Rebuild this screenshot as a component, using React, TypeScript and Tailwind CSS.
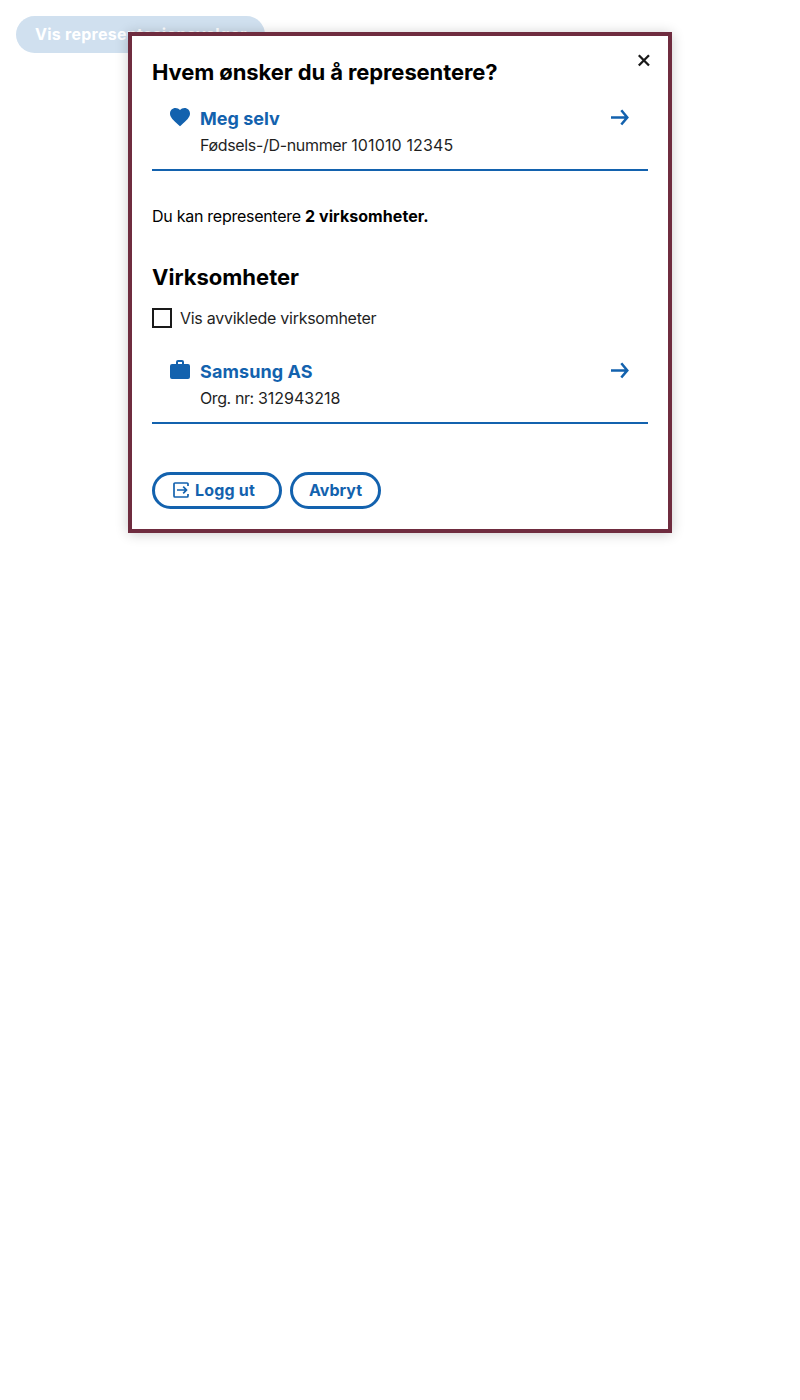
import React from "react";

function Arrow() {
  return (
    <svg width="24" height="24" viewBox="0 0 24 24" fill="none" stroke="#1362ae" strokeWidth="2.5">
      <path d="M3 12.4h16.5M13.3 5.3l6 7.1-6 7.1" />
    </svg>
  );
}

function Entry({ icon, title, children }: { icon: string; title: React.ReactNode; children: React.ReactNode }) {
  return (
    <a className="flex h-[73px] border-b-2 border-[#1362ae] pl-4 pr-4 pt-[7px]">
      <svg className="mr-2 shrink-0" width="24" height="24" viewBox="0 0 24 24" fill="#1362ae">
        <path d={icon} />
      </svg>
      <span className="flex-1">
        <span className="block text-[18px] leading-[27px] font-bold text-[#1362ae]">{title}</span>
        <span className="block text-[16px] leading-[26px] text-[#1f1f1f]">{children}</span>
      </span>
      <Arrow />
    </a>
  );
}

const heart =
  "M12 21.35l-1.45-1.32C5.4 15.36 2 12.28 2 8.5 2 5.42 4.42 3 7.5 3c1.74 0 3.41.81 4.5 2.09C13.09 3.81 14.76 3 16.5 3 19.58 3 22 5.42 22 8.5c0 3.78-3.4 6.86-8.55 11.54L12 21.35z";
const briefcase =
  "M10 2h4a2 2 0 0 1 2 2v2h4a2 2 0 0 1 2 2v11a2 2 0 0 1-2 2H4a2 2 0 0 1-2-2V8a2 2 0 0 1 2-2h4V4a2 2 0 0 1 2-2m4 4V4h-4v2h4z";

export default function App() {
  return (
    <div className="relative min-h-[1400px] bg-white p-4 font-['Inter',sans-serif] text-black">
      <button className="flex h-[37px] w-[249px] rounded-full bg-[#d0e0ef] pl-[19px] pt-[6px] text-[16px] leading-6 font-bold tracking-[0.25px] whitespace-nowrap text-white">
        Vis representasjonsvelger
      </button>
      <div className="absolute top-8 left-32 h-[501px] w-[544px] border-4 border-[#6f2c3f] bg-white px-5 shadow-[0_1px_12px_rgba(0,0,0,0.2)]">
        <button aria-label="Lukk" className="absolute top-[12px] right-[12px]">
          <svg width="24" height="24" viewBox="0 0 24 24" fill="none" stroke="#1a1a1a" strokeWidth="2.3">
            <path d="M6.8 7.3l10.2 10.2M17 7.3L6.8 17.5" />
          </svg>
        </button>
        <h1 className="pt-[20px] text-[22px] leading-[33px] font-bold tracking-[-0.1px]">Hvem ønsker du å representere?</h1>
        <div className="mt-[9px]">
          <Entry icon={heart} title="Meg selv">
            <span className="tracking-[-0.33px]">Fødsels-/D-nummer </span>
            <span className="tracking-[0.13px]">101010 12345</span>
          </Entry>
        </div>
        <p className="mt-[33px] text-[16px] leading-6">
          <span className="tracking-[-0.27px]">Du kan representere </span>
          <b className="tracking-[0.06px]">2 virksomheter.</b>
        </p>
        <h2 className="mt-[33px] text-[22px] leading-[33px] font-bold">Virksomheter</h2>
        <label className="mt-[12px] flex h-6 items-center gap-2 text-[16px] tracking-[-0.27px] text-[#1f1f1f]">
          <span className="size-5 border-2 border-[#1a1a1a]" />
          Vis avviklede virksomheter
        </label>
        <div className="mt-[21px]">
          <Entry icon={briefcase} title={<span className="tracking-[0.1px]">Samsung AS</span>}>
            <span className="tracking-[-0.4px]">Org. nr: </span>
            <span>312943218</span>
          </Entry>
        </div>
        <div className="mt-12 flex gap-2 text-[16px] font-bold text-[#1362ae]">
          <button className="flex h-[37px] w-[130px] items-start rounded-full border-3 border-[#1362ae] pt-[3px] pl-[17px] leading-6 tracking-[0.18px]">
            <svg className="mt-[3px] mr-[5px]" width="18" height="18" viewBox="0 0 18 18" fill="none" stroke="#1362ae" strokeWidth="1.7">
              <path d="M16 5V3Q16 2 15 2H3Q2 2 2 3v12q0 1 1 1h12q1 0 1-1v-2M5 9h10M11.2 5.7L14.5 9l-3.3 3.3" />
            </svg>
            Logg ut
          </button>
          <button className="flex h-[37px] w-[91px] justify-center rounded-full border-3 border-[#1362ae] pt-[3px] leading-6">Avbryt</button>
        </div>
      </div>
    </div>
  );
}
